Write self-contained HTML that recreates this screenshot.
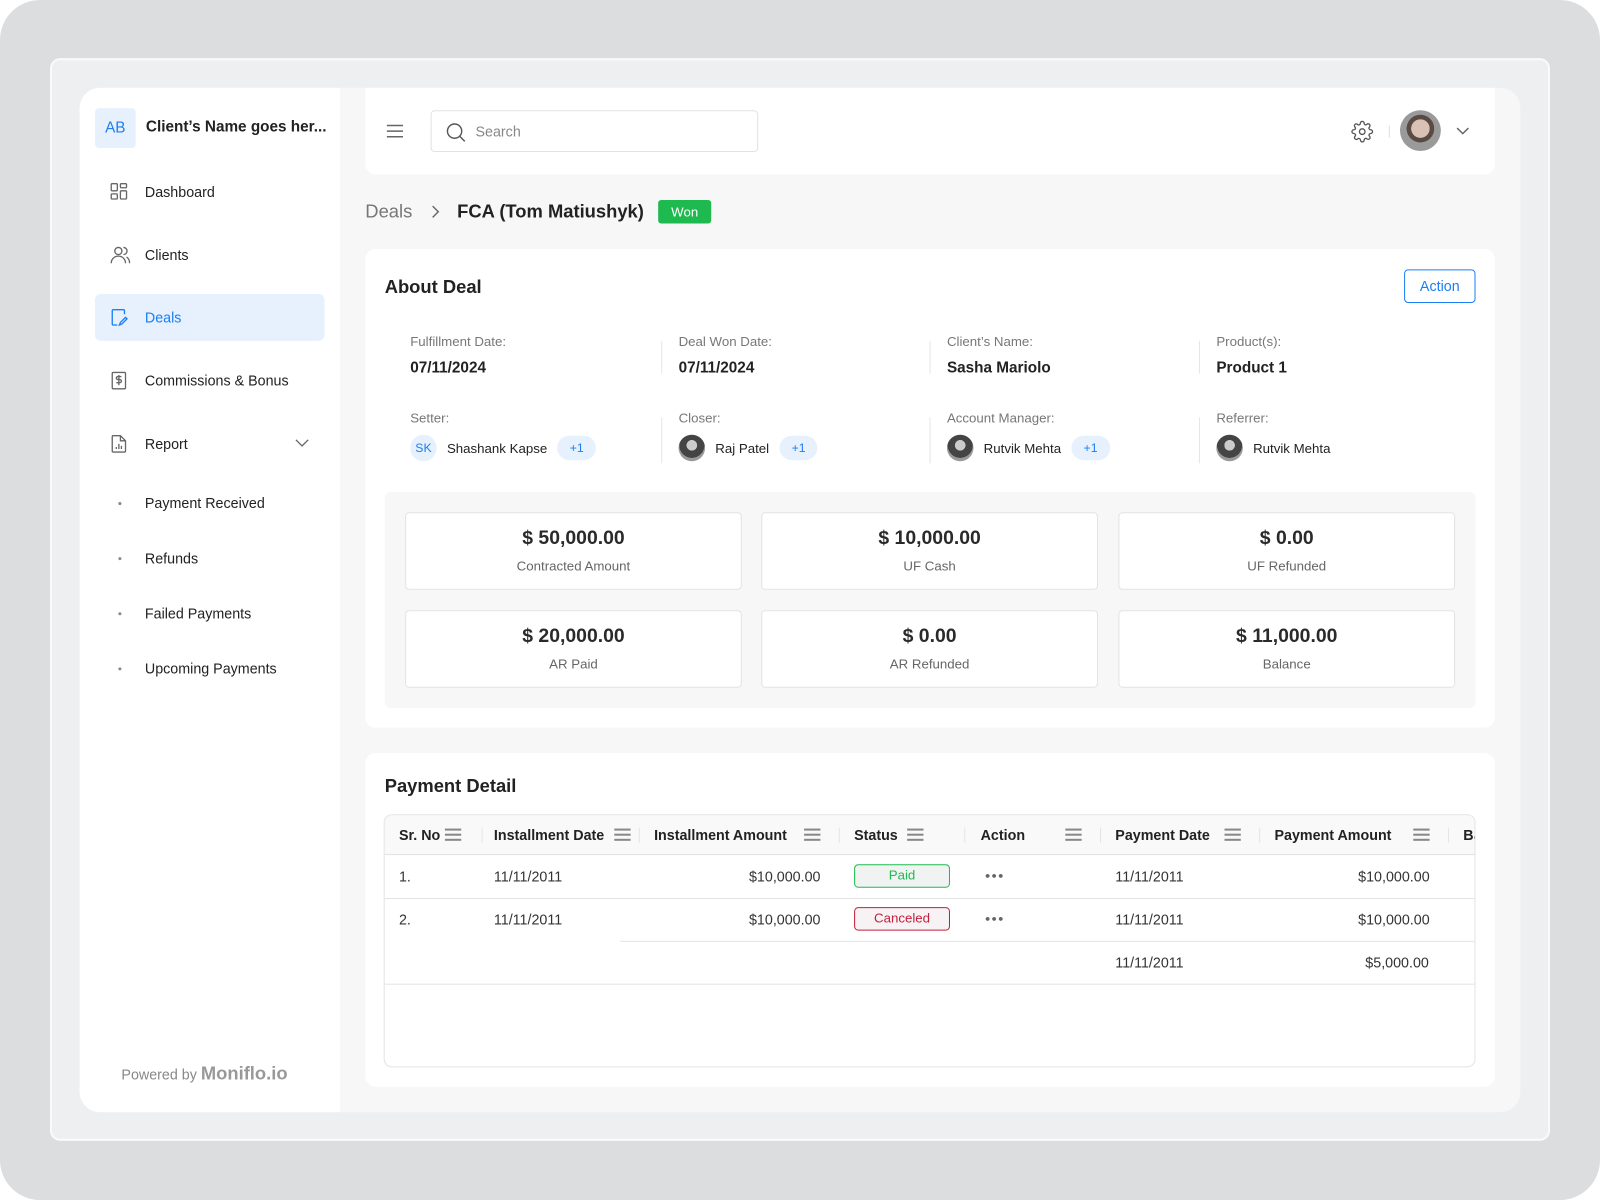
<!DOCTYPE html>
<html><head><meta charset="utf-8"><style>
*{box-sizing:border-box;margin:0;padding:0}
html,body{width:1600px;height:1200px;overflow:hidden;background:#fff;font-family:"Liberation Sans",sans-serif;color:#222}
#bg{position:absolute;left:0;top:0;width:1600px;height:1200px;background:#dcdddf;border-radius:40px}
#s{position:absolute;left:0;top:0;width:1568px;height:1176px;transform:scale(1.02041);transform-origin:0 0}
.a{position:absolute}
.frame{left:49px;top:57px;width:1470px;height:1061px;background:#eeeff0;border:2px solid #fafafa;border-radius:10px}
.app{left:78px;top:86px;width:1412px;height:1004px;background:#f7f7f7;border-radius:20px;overflow:hidden}
.side{left:0;top:0;width:255px;height:1004px;background:#fff}
.nav{position:absolute;left:15px;width:225px;height:46px;border-radius:6px;font-size:14px;color:#222;display:flex;align-items:center;padding-left:49px}
.nav svg{position:absolute;left:15px;top:14px}
.sub{position:absolute;left:64px;font-size:14px;color:#222}
.sub:before{content:"";position:absolute;left:-26px;top:7px;width:3px;height:3px;border-radius:50%;background:#888}
.card{background:#fff;border-radius:10px}
.lbl{font-size:13px;color:#777}
.val{font-size:15px;font-weight:bold;color:#222}
.pill{display:inline-block;background:#e7f1fe;color:#1a7ef5;border-radius:12px;font-size:12px;padding:5px 12px}
.av{display:inline-block;width:26px;height:26px;border-radius:50%;vertical-align:middle;background:radial-gradient(circle at 50% 40%,#ccc 0 25%,#444 26% 60%,#999 61%)}
.vd{position:absolute;width:1px;background:#e6e6e6}
.stat{position:absolute;width:330px;height:76px;background:#fff;border:1px solid #e3e3e3;border-radius:4px;text-align:center}
.stat b{display:block;font-size:19px;margin-top:14px;color:#2a2a2a;font-weight:600}
.stat span{display:block;font-size:13px;color:#666;margin-top:8px}
.th{position:absolute;top:0;height:38px;line-height:38px;font-size:14px;font-weight:bold;color:#222}
.hm{position:absolute;top:13px;width:16px;height:12px;border-top:2px solid #888;border-bottom:2px solid #888}
.hm:after{content:"";position:absolute;left:0;right:0;top:3px;border-top:2px solid #888}
.sep{position:absolute;top:12px;width:1px;height:15px;background:#e5e5e5}
.td{position:absolute;font-size:14px;color:#333}
.dots{position:absolute;font-size:9px;color:#666;letter-spacing:1px}
</style></head><body><div id="bg"></div><div id="s">
<div class="a frame"></div>
<div class="a app">
 <div class="a side">
  <div class="a" style="left:15px;top:20px;width:40px;height:39px;background:#e7f1fe;border-radius:4px;color:#1a7ef5;font-size:15px;text-align:center;line-height:39px">AB</div>
  <div class="a" style="left:65px;top:30px;font-size:15px;font-weight:bold">Client’s Name goes her...</div>
  <div class="nav" style="top:79px"><svg width="18" height="18" viewBox="0 0 18 18" fill="none" stroke="#666" stroke-width="1.3"><rect x="1" y="1" width="6" height="7" rx="1"/><rect x="10" y="1" width="6" height="4" rx="1"/><rect x="1" y="11" width="6" height="5" rx="1"/><rect x="10" y="8" width="6" height="8" rx="1"/></svg>Dashboard</div>
  <div class="nav" style="top:141px"><svg width="20" height="18" viewBox="0 0 20 18" fill="none" stroke="#666" stroke-width="1.3"><circle cx="8" cy="5" r="3.5"/><path d="M1 17c0-4 3-7 7-7s7 3 7 7M13 1.5a3.5 3.5 0 010 7M16 11c2 1 3 3 3 6"/></svg>Clients</div>
  <div class="nav" style="top:202px;background:#e7f1fe;color:#1a7ef5"><svg width="18" height="18" viewBox="0 0 18 18" fill="none" stroke="#1a7ef5" stroke-width="1.3"><path d="M14 6V2.5a1 1 0 00-1-1H3a1 1 0 00-1 1v13a1 1 0 001 1h4M15 9l-5 5-1 2.5 2.5-1 5-5z"/></svg>Deals</div>
  <div class="nav" style="top:264px"><svg width="18" height="18" viewBox="0 0 18 18" fill="none" stroke="#666" stroke-width="1.3"><rect x="2" y="1" width="13" height="16" rx="1"/><path d="M11 5H7.5a1.5 1.5 0 000 3h2a1.5 1.5 0 010 3H6M8.5 3.5v10"/></svg>Commissions &amp; Bonus</div>
  <div class="nav" style="top:326px"><svg width="18" height="18" viewBox="0 0 18 18" fill="none" stroke="#666" stroke-width="1.3"><path d="M10 1H3a1 1 0 00-1 1v14a1 1 0 001 1h11a1 1 0 001-1V6zM10 1v5h5M6 14v-2M8.5 14v-5M11 14v-3"/></svg>Report<svg style="left:196px;top:17px" width="14" height="10" viewBox="0 0 14 10" fill="none" stroke="#666" stroke-width="1.3"><path d="M1 2l6 6 6-6"/></svg></div>
  <div class="sub" style="top:399px">Payment Received</div>
  <div class="sub" style="top:453px">Refunds</div>
  <div class="sub" style="top:507px">Failed Payments</div>
  <div class="sub" style="top:561px">Upcoming Payments</div>
  <div class="a" style="left:41px;top:956px;font-size:14px;color:#888">Powered by <span style="font-size:18px;font-weight:bold;color:#999">Moniflo.io</span></div>
 </div>
 <div class="a card" style="left:280px;top:0;width:1107px;height:85px;border-radius:0 0 10px 10px">
  <svg class="a" style="left:21px;top:36px" width="16" height="13" viewBox="0 0 16 13" stroke="#666" stroke-width="1.4"><path d="M0 1h16M0 6.5h16M0 12h16"/></svg>
  <div class="a" style="left:64px;top:22px;width:321px;height:41px;border:1px solid #e2e2e2;border-radius:4px">
   <svg class="a" style="left:14px;top:11px" width="20" height="20" viewBox="0 0 20 20" fill="none" stroke="#555" stroke-width="1.4"><circle cx="8.5" cy="8.5" r="7"/><path d="M13.5 13.5l5 5"/></svg>
   <div class="a" style="left:43px;top:12px;font-size:14px;color:#888">Search</div>
  </div>
  <svg class="a" style="left:966px;top:32px" width="22" height="22" viewBox="0 0 24 24" fill="none" stroke="#555" stroke-width="1.4"><circle cx="12" cy="12" r="3"/><path d="M19.4 15a1.65 1.65 0 00.33 1.820l.06.06a2 2 0 11-2.830 2.830l-.06-.06a1.65 1.65 0 00-1.820-.33 1.65 1.65 0 00-1 1.510V21a2 2 0 11-4 0v-.09A1.65 1.65 0 009 19.4a1.65 1.65 0 00-1.820.33l-.06.06a2 2 0 11-2.830-2.830l.06-.06A1.65 1.65 0 004.6 15a1.65 1.65 0 00-1.510-1H3a2 2 0 110-4h.09A1.65 1.65 0 004.6 9a1.65 1.65 0 00-.33-1.820l-.06-.06a2 2 0 112.830-2.830l.06.06A1.65 1.65 0 009 4.6a1.65 1.65 0 001-1.510V3a2 2 0 114 0v.09a1.65 1.65 0 001 1.510 1.65 1.65 0 001.820-.33l.06-.06a2 2 0 112.830 2.830l-.06.06A1.65 1.65 0 0019.4 9a1.65 1.65 0 001.510 1H21a2 2 0 110 4h-.09a1.65 1.65 0 00-1.510 1z"/></svg>
  <div class="a" style="left:1003px;top:37px;width:1px;height:12px;background:#ddd"></div>
  <div class="a" style="left:1014px;top:22px;width:40px;height:40px;border-radius:50%;background:radial-gradient(circle at 50% 45%,#d9c2b5 0 30%,#5a4a44 31% 45%,#9a9a9a 46%)"></div>
  <svg class="a" style="left:1069px;top:38px" width="13" height="9" viewBox="0 0 13 9" fill="none" stroke="#666" stroke-width="1.4"><path d="M1 1.5l5.5 5.5 5.5-5.5"/></svg>
 </div>
 <div class="a" style="left:280px;top:111px;font-size:18px;color:#777">Deals</div>
 <svg class="a" style="left:345px;top:115px" width="8" height="13" viewBox="0 0 8 13" fill="none" stroke="#666" stroke-width="1.4"><path d="M1 1l5.5 5.5L1 12"/></svg>
 <div class="a" style="left:370px;top:111px;font-size:18px;font-weight:bold;color:#222">FCA (Tom Matiushyk)</div>
 <div class="a" style="left:567px;top:110px;width:52px;height:23px;background:#1fba4f;color:#fff;font-size:13px;text-align:center;line-height:23px;border-radius:3px">Won</div>

 <div class="a card" style="left:280px;top:158px;width:1107px;height:469px">
  <div class="a" style="left:19px;top:27px;font-size:18px;font-weight:bold">About Deal</div>
  <div class="a" style="left:1018px;top:20px;width:70px;height:33px;border:1.5px solid #1a7ef5;border-radius:4px;color:#1a7ef5;font-size:14px;text-align:center;line-height:30px">Action</div>
  <div class="a lbl" style="left:44px;top:83px">Fulfillment Date:</div><div class="a val" style="left:44px;top:108px">07/11/2024</div>
  <div class="a lbl" style="left:307px;top:83px">Deal Won Date:</div><div class="a val" style="left:307px;top:108px">07/11/2024</div>
  <div class="a lbl" style="left:570px;top:83px">Client’s Name:</div><div class="a val" style="left:570px;top:108px">Sasha Mariolo</div>
  <div class="a lbl" style="left:834px;top:83px">Product(s):</div><div class="a val" style="left:834px;top:108px">Product 1</div>
  <div class="vd" style="left:290px;top:90px;height:32px"></div><div class="vd" style="left:553px;top:90px;height:32px"></div><div class="vd" style="left:817px;top:90px;height:32px"></div>
  <div class="vd" style="left:290px;top:165px;height:45px"></div><div class="vd" style="left:553px;top:165px;height:45px"></div><div class="vd" style="left:817px;top:165px;height:45px"></div>
  <div class="a lbl" style="left:44px;top:158px">Setter:</div>
  <div class="a" style="left:44px;top:182px;font-size:13px;display:flex;align-items:center;gap:10px"><span style="width:26px;height:26px;border-radius:50%;background:#e7f1fe;color:#1a7ef5;font-size:12px;text-align:center;line-height:26px">SK</span>Shashank Kapse<span class="pill">+1</span></div>
  <div class="a lbl" style="left:307px;top:158px">Closer:</div>
  <div class="a" style="left:307px;top:182px;font-size:13px;display:flex;align-items:center;gap:10px"><span class="av"></span>Raj Patel<span class="pill">+1</span></div>
  <div class="a lbl" style="left:570px;top:158px">Account Manager:</div>
  <div class="a" style="left:570px;top:182px;font-size:13px;display:flex;align-items:center;gap:10px"><span class="av"></span>Rutvik Mehta<span class="pill">+1</span></div>
  <div class="a lbl" style="left:834px;top:158px">Referrer:</div>
  <div class="a" style="left:834px;top:182px;font-size:13px;display:flex;align-items:center;gap:10px;height:26px"><span class="av"></span>Rutvik Mehta</div>
  <div class="a" style="left:19px;top:238px;width:1069px;height:212px;background:#f7f7f7;border-radius:6px">
   <div class="stat" style="left:20px;top:20px"><b>$ 50,000.00</b><span>Contracted Amount</span></div>
   <div class="stat" style="left:369px;top:20px"><b>$ 10,000.00</b><span>UF Cash</span></div>
   <div class="stat" style="left:719px;top:20px"><b>$ 0.00</b><span>UF Refunded</span></div>
   <div class="stat" style="left:20px;top:116px"><b>$ 20,000.00</b><span>AR Paid</span></div>
   <div class="stat" style="left:369px;top:116px"><b>$ 0.00</b><span>AR Refunded</span></div>
   <div class="stat" style="left:719px;top:116px"><b>$ 11,000.00</b><span>Balance</span></div>
  </div>
 </div>

 <div class="a card" style="left:280px;top:652px;width:1107px;height:327px">
  <div class="a" style="left:19px;top:22px;font-size:18px;font-weight:bold">Payment Detail</div>
  <div class="a" style="left:18px;top:60px;width:1070px;height:248px;border:1px solid #e3e3e3;border-radius:8px;overflow:hidden">
   <div class="a" style="left:0;top:0;width:100%;height:39px;background:#f9f9f9;border-bottom:1px solid #e3e3e3"></div>
   <div class="th" style="left:14px">Sr. No</div><div class="hm" style="left:59px"></div><div class="sep" style="left:95px"></div>
   <div class="th" style="left:107px">Installment Date</div><div class="hm" style="left:225px"></div><div class="sep" style="left:249px"></div>
   <div class="th" style="left:264px">Installment Amount</div><div class="hm" style="left:411px"></div><div class="sep" style="left:445px"></div>
   <div class="th" style="left:460px">Status</div><div class="hm" style="left:512px"></div><div class="sep" style="left:568px"></div>
   <div class="th" style="left:584px">Action</div><div class="hm" style="left:667px"></div><div class="sep" style="left:701px"></div>
   <div class="th" style="left:716px">Payment Date</div><div class="hm" style="left:823px"></div><div class="sep" style="left:857px"></div>
   <div class="th" style="left:872px">Payment Amount</div><div class="hm" style="left:1008px"></div><div class="sep" style="left:1042px"></div>
   <div class="th" style="left:1057px">Ba</div>
   <div class="a" style="left:0;top:81px;width:100%;border-top:1px solid #e3e3e3"></div>
   <div class="a" style="left:231px;top:123px;right:0;border-top:1px solid #e3e3e3"></div>
   <div class="a" style="left:0;top:165px;width:100%;border-top:1px solid #e3e3e3"></div>
   <div class="td" style="left:14px;top:52px">1.</div><div class="td" style="left:107px;top:52px">11/11/2011</div><div class="td" style="left:357px;top:52px">$10,000.00</div>
   <div class="a" style="left:460px;top:48px;width:94px;height:23px;border:1.5px solid #1fba4f;background:#f0f3f2;border-radius:4px;color:#1fba4f;font-size:13px;text-align:center;line-height:20px">Paid</div>
   <div class="dots" style="left:588px;top:54px">●●●</div>
   <div class="td" style="left:716px;top:52px">11/11/2011</div><div class="td" style="left:954px;top:52px">$10,000.00</div>
   <div class="td" style="left:14px;top:94px">2.</div><div class="td" style="left:107px;top:94px">11/11/2011</div><div class="td" style="left:357px;top:94px">$10,000.00</div>
   <div class="a" style="left:460px;top:90px;width:94px;height:23px;border:1.5px solid #c41f3d;background:#f7f2f3;border-radius:4px;color:#c41f3d;font-size:13px;text-align:center;line-height:20px">Canceled</div>
   <div class="dots" style="left:588px;top:96px">●●●</div>
   <div class="td" style="left:716px;top:94px">11/11/2011</div><div class="td" style="left:954px;top:94px">$10,000.00</div>
   <div class="td" style="left:716px;top:136px">11/11/2011</div><div class="td" style="left:961px;top:136px">$5,000.00</div>
  </div>
 </div>
</div>
</div></body></html>
